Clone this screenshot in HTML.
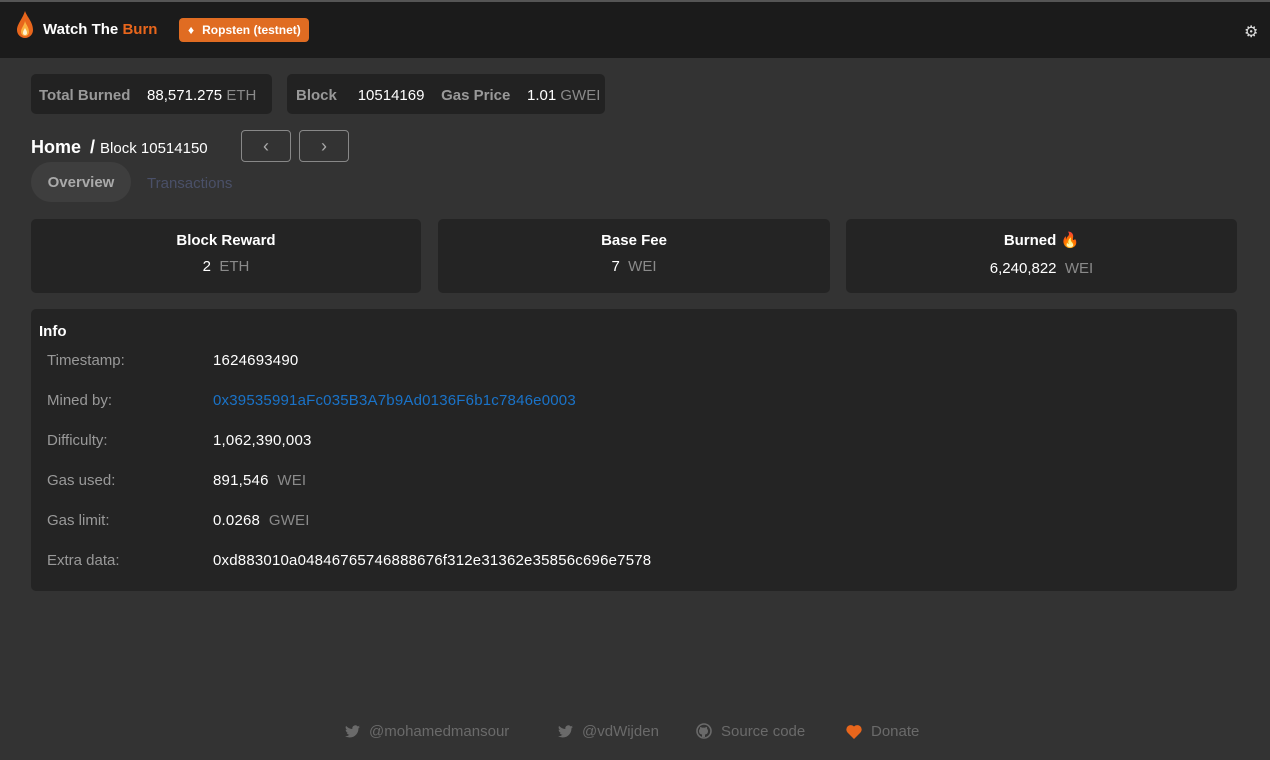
<!DOCTYPE html><html><head><style>
body{margin:0;width:1270px;height:760px;background:#333333;font-family:"Liberation Sans",sans-serif;color:#fff;overflow:hidden;position:relative}
.top{position:absolute;left:0;top:0;width:1270px;height:56px;background:#1b1b1b;border-top:2px solid #555}
.box{position:absolute;background:#222;border-radius:5px}
.g{color:#8a8a8a}.lbl{color:#999;font-weight:bold}
.abs{position:absolute;white-space:nowrap}
.card{position:absolute;top:219px;height:74px;background:#242424;border-radius:5px;width:390px;text-align:center;font-size:15px}
.row{position:absolute;left:47px;font-size:15px;color:#999}
.val{position:absolute;left:213px;font-size:15px;color:#fff;letter-spacing:0.2px}
.foot{position:absolute;top:721px;height:20px;font-size:15px;color:#6a6a6a;display:flex;align-items:center;white-space:nowrap}
.foot svg{margin-right:9px}
</style></head><body>
<div class="top"></div>
<svg class="abs" style="left:16px;top:11px" width="18" height="30" viewBox="0 0 18 30"><path d="M9 0C11 6 17 11 17 19A8 8 0 0 1 1 19C1 13 6 9 9 0Z" fill="#e8661c"/><path d="M9 10C10 14 13 16 13 21A4 4 0 0 1 5 21C5 17 8 15 9 10Z" fill="#fbb040"/><path d="M9 17C10 19 11 20 11 22A2 2 0 0 1 7 22C7 20 8 19 9 17Z" fill="#fff3d0"/></svg>
<div class="abs" style="left:43px;top:21px;font-size:15px;font-weight:bold">Watch The <span style="color:#e8661c">Burn</span></div>
<div class="abs" style="left:179px;top:18px;width:130px;height:24px;background:#e06c22;border-radius:4px;font-size:12px;font-weight:bold;line-height:24px"><span style="margin-left:9px">♦</span><span style="margin-left:8px">Ropsten (testnet)</span></div>
<div class="abs" style="left:1244px;top:22px;font-size:16px;color:#ddd">⚙</div>
<div class="box" style="left:31px;top:74px;width:241px;height:40px"></div>
<div class="abs" style="left:39px;top:87px;font-size:15px"><span class="lbl">Total Burned</span>&nbsp;&nbsp;&nbsp; 88,571.275 <span class="g">ETH</span></div>
<div class="box" style="left:287px;top:74px;width:318px;height:40px"></div>
<div class="abs" style="left:296px;top:87px;font-size:15px"><span class="lbl">Block</span>&nbsp;&nbsp;&nbsp;&nbsp; 10514169&nbsp;&nbsp;&nbsp; <span class="lbl">Gas Price</span>&nbsp;&nbsp;&nbsp; 1.01 <span class="g">GWEI</span></div>
<div class="abs" style="left:31px;top:137px;font-size:18px;font-weight:bold">Home <span style="margin-left:4px">/</span> <span style="font-size:15px;font-weight:normal">Block 10514150</span></div>
<div class="abs" style="left:241px;top:130px;width:48px;height:30px;border:1px solid #888;border-radius:4px;text-align:center;line-height:30px;color:#aaa;font-size:18px">‹</div>
<div class="abs" style="left:299px;top:130px;width:48px;height:30px;border:1px solid #888;border-radius:4px;text-align:center;line-height:30px;color:#aaa;font-size:18px">›</div>
<div class="abs" style="left:31px;top:162px;width:100px;height:40px;background:#3e3e3e;border-radius:20px;text-align:center;line-height:42px;font-size:15px;font-weight:bold;color:#aaa">Overview</div>
<div class="abs" style="left:147px;top:175px;font-size:15px;color:#4a5068">Transactions</div>
<div class="card" style="left:31px"><div style="margin-top:13px;font-weight:bold">Block Reward</div><div style="margin-top:9px">2 &nbsp;<span class="g">ETH</span></div></div>
<div class="card" style="left:438px;width:392px"><div style="margin-top:13px;font-weight:bold">Base Fee</div><div style="margin-top:9px">7 &nbsp;<span class="g">WEI</span></div></div>
<div class="card" style="left:846px;width:391px"><div style="margin-top:12px;height:19px;font-weight:bold">Burned <span style="color:#e8661c">🔥</span></div><div style="margin-top:10px">6,240,822 &nbsp;<span class="g">WEI</span></div></div>
<div class="box" style="left:31px;top:309px;width:1206px;height:282px;background:#242424"></div>
<div class="abs" style="left:39px;top:323px;font-size:15px;font-weight:bold">Info</div>
<div class="row" style="top:352px">Timestamp:</div><div class="val" style="top:352px">1624693490</div>
<div class="row" style="top:392px">Mined by:</div><div class="val" style="top:392px;color:#1a73c8">0x39535991aFc035B3A7b9Ad0136F6b1c7846e0003</div>
<div class="row" style="top:432px">Difficulty:</div><div class="val" style="top:432px">1,062,390,003</div>
<div class="row" style="top:472px">Gas used:</div><div class="val" style="top:472px">891,546 &nbsp;<span class="g">WEI</span></div>
<div class="row" style="top:512px">Gas limit:</div><div class="val" style="top:512px">0.0268 &nbsp;<span class="g">GWEI</span></div>
<div class="row" style="top:552px">Extra data:</div><div class="val" style="top:552px">0xd883010a04846765746888676f312e31362e35856c696e7578</div>
<div class="foot" style="left:345px"><svg width="15" height="13" viewBox="0 0 24 20"><path d="M24 2.4a10 10 0 0 1-2.8.8A5 5 0 0 0 23.3.5a10 10 0 0 1-3.1 1.2A4.9 4.9 0 0 0 11.8 6 14 14 0 0 1 1.7.9a4.9 4.9 0 0 0 1.5 6.6A4.9 4.9 0 0 1 1 6.9a4.9 4.9 0 0 0 3.9 4.8 4.9 4.9 0 0 1-2.2.1 4.9 4.9 0 0 0 4.6 3.4A9.9 9.9 0 0 1 0 17.3 14 14 0 0 0 7.5 19.5c9 0 14-7.5 14-14v-.6A10 10 0 0 0 24 2.4z" fill="#6a6a6a"/></svg>@mohamedmansour</div>
<div class="foot" style="left:558px"><svg width="15" height="13" viewBox="0 0 24 20"><path d="M24 2.4a10 10 0 0 1-2.8.8A5 5 0 0 0 23.3.5a10 10 0 0 1-3.1 1.2A4.9 4.9 0 0 0 11.8 6 14 14 0 0 1 1.7.9a4.9 4.9 0 0 0 1.5 6.6A4.9 4.9 0 0 1 1 6.9a4.9 4.9 0 0 0 3.9 4.8 4.9 4.9 0 0 1-2.2.1 4.9 4.9 0 0 0 4.6 3.4A9.9 9.9 0 0 1 0 17.3 14 14 0 0 0 7.5 19.5c9 0 14-7.5 14-14v-.6A10 10 0 0 0 24 2.4z" fill="#6a6a6a"/></svg>@vdWijden</div>
<div class="foot" style="left:696px"><svg width="16" height="16" viewBox="0 0 16 16"><circle cx="8" cy="8" r="7" fill="none" stroke="#6a6a6a" stroke-width="1.6"/><path d="M6 14v-2.5c-2-.3-3-1.3-3-3.5 0-1 .4-1.6 1-2.2-.1-.5-.1-1.2.1-1.8 1 0 1.6.5 2 .8.6-.2 2.2-.2 2.8 0 .4-.3 1-.8 2-.8.2.6.2 1.3.1 1.8.6.6 1 1.2 1 2.2 0 2.2-1 3.2-3 3.5V14z" fill="#6a6a6a"/></svg>Source code</div>
<div class="foot" style="left:846px"><svg width="16" height="15" viewBox="0 0 16 15"><path d="M8 15L1.5 8.5A4 4 0 0 1 8 2.5a4 4 0 0 1 6.5 6z" fill="#e8661c"/></svg>Donate</div>
</body></html>
